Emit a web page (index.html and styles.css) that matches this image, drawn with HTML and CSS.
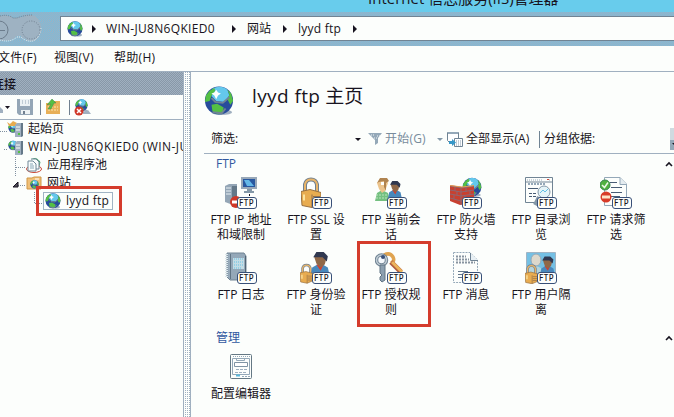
FILE: index.html
```html
<!DOCTYPE html>
<html lang="zh-CN">

<head>
    <meta charset="utf-8">
    <title>Internet 信息服务(IIS)管理器</title>
    <link rel="stylesheet" href="styles.css">
</head>

<body>
    <!-- shared icon shapes -->
    <svg class="defs" width="0" height="0">
        <symbol id="globe" viewBox="0 0 32 32">
            <ellipse cx="19" cy="28" rx="11" ry="3" fill="#a0b0c0" />
            <circle cx="16" cy="15.500" r="15" fill="#284c9c" />
            <path d="M9 3 C14 0 21 0 25 4 L27 10 L22 17 L13 16 L8 11z" fill="#64c8ec" />
            <path d="M2 10 L6 5 L11 2 L12 5 L8 10 L6 16 L1 17z M25 4 L29 8 L31 16 L28 20 L25 14 L27 9z M8 20 L14 19 L21 23 L20 28 L15 30 L9 27z" fill="#54c044" />
            <path d="M8 13 L12 17 L20 18 L27 12 M9 28 L19 29 L23 24" fill="none" stroke="#708494" stroke-width="2" />
            <path d="M13 4 L15 7 L18 8 L15 10 L13 14 L11 10 L8 8 L11 7z" fill="#fcfefc" />
        </symbol>
        <symbol id="server" viewBox="0 0 16 16">
            <path d="M8 4 L10 2 H16 V15 L14 16 H8z" fill="#a0b0c0" />
            <path d="M14 2 H16 V15 L14 16z" fill="#647888" />
            <path d="M9 6 H13 M9 9 H13" stroke="#fcfefc" />
            <path d="M11 12 H13 V14 H11z" fill="#54c044" />
        </symbol>
        <symbol id="person" viewBox="0 0 20 24">
            <path d="M1 24 L3 15 L8 12 H13 L18 15 L20 24z" fill="#4888bc" />
            <path d="M7 12 L11 18 L14 12z" fill="#d04030" />
            <path d="M5 5 L8 1 H14 L17 5 L15 12 L11 15 L7 11z" fill="#906848" />
            <path d="M4 5 L7 0 H14 L18 4 L17 9 L13 5 H7z" fill="#303850" />
        </symbol>
        <symbol id="lock" viewBox="0 0 20 30">
            <path d="M4 15 V7 Q5 2 10 2 Q15 2 16 7 V16" fill="none" stroke="#708090" stroke-width="4" />
            <path d="M4 15 V7 Q5 2 10 2 Q15 2 16 7 V16" fill="none" stroke="#e8b468" stroke-width="2" />
            <path d="M0 14 L9 12 L20 15 V26 L11 30 L1 28z" fill="#e8ac50" stroke="#987040" />
            <path d="M11 17 V30 M12 19 H19 M12 22 H19 M12 25 H19" stroke="#906c48" />
            <path d="M3 17 V23" stroke="#fce4a0" stroke-width="2" />
        </symbol>
    </svg>

    <div class="titlebar"><span>Internet 信息服务(IIS)管理器</span></div>

    <div class="navbar">
        <svg class="nav-buttons" width="44" height="30" viewBox="0 0 44 30">
            <path d="M0 3 Q8 1 13 5 H17 Q24 3 31 2 Q39 3 41 13 Q42 23 34 28 Q27 29 21 23 H17 Q11 29 0 27z" fill="#9eb2c2" />
            <path d="M0 3 Q8 1 13 5 H17 Q24 2 33 2" fill="none" stroke="#708090" stroke-dasharray="1 1" />
            <path d="M41 15 Q40 25 33 28 Q26 29 21 24 H17 Q10 30 0 27" fill="none" stroke="#e8f4f8" stroke-dasharray="1 1" />
            <circle cx="-1" cy="17" r="9" fill="none" stroke="#6c7c8c" />
            <circle cx="31" cy="17" r="9" fill="none" stroke="#708090" stroke-dasharray="1 1.500" />
            <path d="M0 17.500 H5" stroke="#6c7c8c" />
        </svg>
        <div class="address">
            <svg width="16" height="16"><use href="#globe" /></svg>
            <i class="arrow"></i>
            <span class="server-name">WIN-JU8N6QKIED0</span>
            <i class="arrow"></i>
            <span>网站</span>
            <i class="arrow"></i>
            <span class="site-name">lyyd ftp</span>
            <i class="arrow"></i>
        </div>
    </div>

    <div class="menubar">
        <span class="menu file">文件(F)</span>
        <span class="menu view">视图(V)</span>
        <span class="menu help">帮助(H)</span>
    </div>

    <div class="main">
        <div class="sidebar">
            <div class="sidebar-title"><span>连接</span></div>
            <div class="tools">
                <svg width="92" height="18" viewBox="0 0 92 18">
                    <path d="M0 9 L3 12 V15 H0z" fill="#a0b0c0" />
                    <path d="M5 8 H10 L7.500 11z" fill="#181420" />
                    <path d="M17 1 H33 V17 H19 L17 15z" fill="#94a6b6" />
                    <path d="M20 1 H30 V8 H20z M21 12 H30 V16 H21z" fill="#ecf2f4" />
                    <path d="M22 3 H29 M22 5 H29" stroke="#94a6b6" stroke-dasharray="1 2" />
                    <path d="M23 13 H25 V16 H23z" fill="#708090" />
                    <path d="M40.500 2 V17 M69.500 2 V17" stroke="#708090" />
                    <path d="M46 5 H50 L52 3 H60 V16 H46z" fill="#e8b058" />
                    <path d="M48 9 H58 M48 12 H58" stroke="#fce8b0" stroke-dasharray="2 1" />
                    <path d="M47 7 L52 1 L56 5 H54 L51 11 H48 L51 6z" fill="#54c044" stroke="#408448" stroke-width=".5" />
                    <svg x="75" y="1" width="13" height="13"><use href="#globe" /></svg>
                    <path d="M83 14 L88 12 L91 16 H83z" fill="#a0b0c0" />
                    <circle cx="79" cy="13" r="4.500" fill="#d03828" />
                    <path d="M77 11 L81 15 M81 11 L77 15" stroke="#fff" stroke-width="1.500" />
                </svg>
            </div>
            <div class="tree">
                <div class="node level-1">
                    <svg width="16" height="16">
                        <svg x="1" y="2" width="10" height="10"><use href="#globe" /></svg>
                        <path d="M0 1 L3 3 L6 0 L10 2 L8 5 L2 5z" fill="#e8ac50" />
                        <use href="#server" />
                    </svg>
                    <span>起始页</span>
                </div>
                <div class="node level-1">
                    <svg width="16" height="16">
                        <svg x="1" y="1" width="10" height="11"><use href="#globe" /></svg>
                        <use href="#server" />
                    </svg>
                    <span class="server-root">WIN-JU8N6QKIED0 (WIN-JU8N6QKIED0\Administrator)</span>
                </div>
                <div class="node level-2">
                    <svg width="16" height="16">
                        <ellipse cx="8" cy="12" rx="7.500" ry="3.500" fill="#fff" stroke="#c84838" />
                        <path d="M5 3 Q10 -1 14 5 L13 9" fill="#c8e4d8" stroke="#48a070" />
                        <path d="M2 4 H7 L10 7 V14 H2z M5 2 H10 L13 5 V12 H10" fill="#f8fcfc" stroke="#708898" />
                        <path d="M4 7 H7 M4 9 H8 M4 11 H8" stroke="#88a8b8" />
                    </svg>
                    <span>应用程序池</span>
                </div>
                <div class="node level-2">
                    <svg width="16" height="16">
                        <path d="M1 3 H6 L8 2 H15 V14 H1z" fill="#f0c078" stroke="#d09848" />
                        <path d="M9 4 H13" stroke="#fff" />
                        <svg x="4" y="5" width="9" height="9"><use href="#globe" /></svg>
                    </svg>
                    <span>网站</span>
                </div>
                <div class="node level-3">
                    <span class="selected">
                        <svg width="16" height="16"><use href="#globe" /></svg>
                        <span class="site-name">lyyd ftp</span>
                    </span>
                </div>
                <svg class="tree-lines" width="50" height="90" viewBox="0 0 50 90">
                    <path d="M0 11.500 H7 M4 29.500 H7 M15.500 37 V57 M16 47.500 H26 M18 65.500 H26 M34.500 72 V83 M35 83.500 H43" fill="none" stroke="#8090a0" stroke-dasharray="1 1" />
                    <path d="M13 67 L18 62 V67z" fill="#504c58" stroke="#181420" />
                </svg>
                <i class="marker site-marker"></i>
            </div>
        </div>
        <div class="splitter"></div>

        <div class="content">
            <div class="page-title">
                <svg width="30" height="32"><use href="#globe" /></svg>
                <h1><span class="title-latin">lyyd ftp</span> 主页</h1>
            </div>
            <div class="filterbar">
                <span class="filter-label">筛选:</span>
                <i class="down"></i>
                <svg class="funnel" width="15" height="14" viewBox="0 0 15 14">
                    <path d="M0 1 H14 L10 6 V11 L7 13 V8z" fill="#94a8b8" />
                    <path d="M3 3 H7 M9 4 H12 M6 6 H9" stroke="#eef4f6" stroke-dasharray="1 1" />
                </svg>
                <span class="muted">开始(G)</span>
                <i class="down light"></i>
                <svg class="show-all" width="16" height="17" viewBox="0 0 16 17">
                    <path d="M.5 1.500 H11.500 V11.500 H2.500 L.5 9.500z" fill="#fff" stroke="#708494" />
                    <path d="M1 2 H11" stroke="#94a8b8" stroke-width="2" />
                    <path d="M7.500 7.500 H15.500 V15.500 H7.500z" fill="#fff" stroke="#708494" />
                    <path d="M9 10 H15 M9 12 H15 M9 14 H15" stroke="#889cac" stroke-dasharray="1 1" />
                    <path d="M2 10 H5 V8 L9 11.500 L5 15 V13 H2z" fill="#3898c8" />
                </svg>
                <span class="show-label">全部显示(A)</span>
                <i class="divider"></i>
                <span class="group-by">分组依据:</span>
                <svg class="combo" width="4" height="22" viewBox="0 0 4 22">
                    <path d="M0 0 H4 V12 H0z" fill="#d0dae0" />
                    <path d="M0 12 H4 V22 H0z" fill="#94a8b8" />
                    <path d="M2 15 H4 V17z" fill="#181420" />
                </svg>
            </div>

            <div class="group-title"><span>FTP</span>
                <svg width="8" height="6"><path d="M1 5 L4 2 L7 5" fill="none" stroke="#181420" stroke-width="1.600" /></svg>
            </div>
            <div class="features">
                <div class="feature">
                    <div class="icon">
                        <svg width="32" height="32">
                            <path d="M0 9 L4 7 H12 V25 L8 28 L0 25z" fill="#94a6b6" />
                            <path d="M7 9 H12 V25 L7 28z" fill="#647888" />
                            <path d="M1 11 H6 M1 14 H6 M1 17 H6" stroke="#e8f0f4" />
                            <path d="M16 0 H32 V12 H16z" fill="#98a8b8" />
                            <path d="M18 2 H30 V10 H18z" fill="#2858a0" />
                            <path d="M19 3 L24 3 L29 9 H22z" fill="#64b8e8" />
                            <path d="M22 13 H27 M19 15 H29" stroke="#8498a8" stroke-width="2" />
                            <path d="M24.500 17 V22" stroke="#181420" stroke-dasharray="2 1" />
                            <circle cx="11" cy="25" r="6" fill="#d03828" />
                            <path d="M7 25 H15" stroke="#fff" stroke-width="3" />
                        </svg>
                        <b class="badge">FTP</b>
                    </div>
                    <p>FTP IP 地址<br>和域限制</p>
                </div>
                <div class="feature">
                    <div class="icon">
                        <svg width="32" height="32"><svg x="1" y="0" width="20" height="31"><use href="#lock" /></svg></svg>
                        <b class="badge">FTP</b>
                    </div>
                    <p>FTP SSL 设<br>置</p>
                </div>
                <div class="feature">
                    <div class="icon">
                        <svg width="32" height="32">
                            <path d="M0 24 L2 16 L7 13 L13 16 L15 24z" fill="#74c080" />
                            <path d="M1 18 H12 M1 21 H12" stroke="#b8e4bc" stroke-dasharray="2 1" />
                            <path d="M2 6 L5 2 H11 L13 6 L10 14 L7 16 L4 12z" fill="#ecc48c" />
                            <path d="M2 6 L5 1 H12 L14 4 L11 6 L11 14 L9 10 V4 L4 5z" fill="#b08450" />
                            <path d="M6 5 H9 V8 H6z" fill="#fcfefc" />
                            <svg x="12" y="3" width="15" height="20"><use href="#person" /></svg>
                        </svg>
                        <b class="badge">FTP</b>
                    </div>
                    <p>FTP 当前会<br>话</p>
                </div>
                <div class="feature">
                    <div class="icon">
                        <svg width="32" height="32">
                            <svg x="12" y="0" width="20" height="21"><use href="#globe" /></svg>
                            <path d="M0 8 L12 10 L24 9 V26 L10 28 L0 24z" fill="#c84030" />
                            <path d="M0 9 L12 11 L24 9 M0 13 L11 15 L24 13 M0 17 L11 19 L24 17 M0 21 L11 24 L24 21 M11 11 V28 M5 10 V14 M7 14 V18 M4 18 V22 M16 11 V15 M20 14 V18 M15 18 V22" fill="none" stroke="#807080" stroke-width=".8" />
                            <path d="M0 8.500 L12 10 L24 8.500" fill="none" stroke="#e0a058" />
                        </svg>
                        <b class="badge">FTP</b>
                    </div>
                    <p>FTP 防火墙<br>支持</p>
                </div>
                <div class="feature">
                    <div class="icon">
                        <svg width="32" height="32">
                            <path d="M.5 .5 H27.500 V25.500 H.5z" fill="#fcfefc" stroke="#708494" />
                            <path d="M2 3 H17 M24 3 H26" stroke="#94a8b8" stroke-dasharray="1 1" />
                            <path d="M1 5 H27" stroke="#708494" />
                            <path d="M22 2.500 H24" stroke="#d04838" />
                            <path d="M3 7 H20" stroke="#94a8b8" stroke-width="2" stroke-dasharray="2 1" />
                            <path d="M3 11.500 H13 M4 16.500 H7 M8 16.500 H11 M4 19.500 H7 M8 19.500 H11" stroke="#485c74" />
                            <path d="M14 20 L10 28" stroke="#8498a8" stroke-width="4" />
                            <circle cx="19" cy="15" r="6" fill="#e4f4f8" stroke="#8498a8" />
                            <path d="M15 16 L18 13 L20 15 L23 12" fill="none" stroke="#64c0e4" />
                        </svg>
                        <b class="badge">FTP</b>
                    </div>
                    <p>FTP 目录浏<br>览</p>
                </div>
                <div class="feature">
                    <div class="icon">
                        <svg width="32" height="32">
                            <path d="M4.500 .5 H20 L26.500 7 V28.500 H4.500z" fill="#fcfefc" stroke="#94a8b8" />
                            <path d="M20 .5 V7.500 H27" fill="#e4ecf0" stroke="#94a8b8" />
                            <path d="M10 5.500 H17 M11 10.500 H22 M11 15.500 H22 M11 19.500 H20" stroke="#485c74" />
                            <circle cx="5" cy="8" r="5" fill="#50b040" stroke="#388450" />
                            <path d="M2 8 L4.500 10.500 L8 5.500" fill="none" stroke="#ecf8e8" stroke-width="1.500" />
                            <circle cx="6" cy="20" r="5.500" fill="#d83c28" />
                            <path d="M2 20 H10" stroke="#fce4c8" stroke-width="3" />
                        </svg>
                        <b class="badge">FTP</b>
                    </div>
                    <p>FTP 请求筛<br>选</p>
                </div>
                <div class="feature">
                    <div class="icon">
                        <svg width="32" height="32">
                            <path d="M2 1 H19 L21 4 V28 H5 L2 25z" fill="#94a8b8" stroke="#708494" />
                            <path d="M8 6 H19 V17 H8z" fill="#c4dce4" />
                            <path d="M9 7 H18 M9 10 H18 M9 13 H18 M9 16 H16" stroke="#64c0e4" stroke-dasharray="1 1" />
                            <path d="M5.500 2 V27" stroke="#607484" />
                            <path d="M1.500 2 V26" stroke="#dce8ec" stroke-width="3" stroke-dasharray="1 1" />
                            <path d="M20.500 4 V27" stroke="#506474" />
                        </svg>
                        <b class="badge">FTP</b>
                    </div>
                    <p>FTP 日志</p>
                </div>
                <div class="feature">
                    <div class="icon">
                        <svg width="32" height="32">
                            <svg x="9" y="0" width="21" height="25"><use href="#person" /></svg>
                            <svg x="0" y="11" width="13" height="21"><use href="#lock" /></svg>
                        </svg>
                        <b class="badge">FTP</b>
                    </div>
                    <p>FTP 身份验<br>证</p>
                </div>
                <div class="feature">
                    <div class="icon">
                        <svg width="32" height="32">
                            <path d="M9 3 Q15 0 18 5 Q20 9 16 11" fill="none" stroke="#e0a450" stroke-width="3.500" />
                            <path d="M16 10 L26 20" stroke="#b05c40" stroke-width="5" />
                            <path d="M17 10 L27 20" stroke="#ecb45c" stroke-width="3" />
                            <circle cx="6.500" cy="8" r="5" fill="#f4f8fc" stroke="#708494" stroke-width="3.500" />
                            <circle cx="6.500" cy="8" r="5" fill="none" stroke="#c0ccd4" stroke-width="1.500" />
                            <circle cx="8" cy="5" r="2" fill="#385078" />
                            <path d="M5 13 H10 V28 L7 30 L5 28 V25 L7 23 L5 21z" fill="#8ca0b0" stroke="#607484" />
                        </svg>
                        <b class="badge">FTP</b>
                    </div>
                    <p>FTP 授权规<br>则</p>
                    <i class="marker rule-marker"></i>
                </div>
                <div class="feature">
                    <div class="icon">
                        <svg width="32" height="32">
                            <path d="M3.500 .5 H20 L27.500 8 V30.500 H3.500z" fill="#fcfefc" stroke="#94a8b8" stroke-dasharray="2 1" />
                            <path d="M20.500 1 V8.500 H28" fill="#e8f0f4" stroke="#708494" />
                            <path d="M6 4.500 H16 M6 7.500 H19 M6 10.500 H25" stroke="#8894a0" stroke-width="2" stroke-dasharray="2 1" />
                            <path d="M8 19.500 H18 M8 22.500 H14 M8 25.500 H13" stroke="#64788c" />
                        </svg>
                        <b class="badge">FTP</b>
                    </div>
                    <p>FTP 消息</p>
                </div>
                <div class="feature">
                    <div class="icon">
                        <svg width="32" height="32">
                            <path d="M1.500 .5 H30.500 V29.500 H1.500z" fill="#74c0e4" stroke="#a0b4c4" />
                            <path d="M2 15 L7 12 L16 16 L17 28 H2z" fill="#b4d4dc" />
                            <ellipse cx="11" cy="8" rx="5" ry="6" fill="#dcd8cc" stroke="#94a8b8" />
                            <svg x="14" y="4" width="16" height="20"><use href="#person" /></svg>
                            <svg x="0" y="12" width="13" height="20"><use href="#lock" /></svg>
                        </svg>
                        <b class="badge">FTP</b>
                    </div>
                    <p>FTP 用户隔<br>离</p>
                </div>
            </div>

            <div class="group-title manage"><span>管理</span>
                <svg width="8" height="6"><path d="M1 5 L4 2 L7 5" fill="none" stroke="#181420" stroke-width="1.600" /></svg>
            </div>
            <div class="features">
                <div class="feature">
                    <div class="icon config">
                        <svg width="22" height="25" viewBox="0 0 22 25">
                            <rect x=".5" y=".5" width="21" height="24" rx="1" fill="#fcfefc" stroke="#647884" />
                            <path d="M3 2.500 H20" stroke="#94a8b8" stroke-dasharray="1 1" />
                            <path d="M2.500 4.500 H19.500 V20.500 H2.500z M6.500 4 V6.500 H14.500 V4" fill="none" stroke="#94a8b8" />
                            <path d="M4.500 8.500 H17.500 V12.500 H4.500z" fill="#fff" stroke="#8094a4" />
                            <path d="M6 15.500 H17 M5 18.500 H17" stroke="#a0b0c0" stroke-dasharray="3 1" />
                            <path d="M6 21.500 H10" stroke="#58b8dc" stroke-width="2" />
                            <path d="M12 22.500 H20" stroke="#94a8b8" stroke-dasharray="2 1" />
                        </svg>
                    </div>
                    <p>配置编辑器</p>
                </div>
            </div>
        </div>
    </div>
</body>

</html>
```
FILE: styles.css
```css
* {
    box-sizing: border-box;
}

body {
    width: 674px;
    height: 417px;
    margin: 0;
    overflow: hidden;
    background-color: #fcfefc;
    color: #181420;
    font-family: "Open Sans", "Noto Sans CJK SC", sans-serif;
    font-size: 12px;
    line-height: 18px;
    white-space: nowrap;
    display: flex;
    flex-direction: column;
}

svg {
    display: block;
    flex: none;
}

i {
    flex: none;
}

.defs {
    position: absolute;
}

.titlebar {
    height: 12px;
    flex: none;
    overflow: hidden;
    background-color: #68ccec;
    padding-left: 368px;
    font-size: 15px;
    line-height: 20px;
}

.titlebar span {
    display: block;
    margin-top: -12px;
}

.navbar {
    height: 34px;
    flex: none;
    display: flex;
    background: repeating-conic-gradient(#a0b0c0 0 25%, #78bcdc 0 50%) 0 0 / 2px 2px;
}

.nav-buttons {
    margin: 1px 16px 0 0;
}

.address {
    flex: 1;
    height: 25px;
    margin-top: 4px;
    padding-left: 6px;
    border: 1px solid #708494;
    border-right: none;
    background-color: #fcfefc;
    display: flex;
    align-items: center;
}

/* breadcrumb arrow */
.arrow {
    border: 4px solid transparent;
    border-left-color: #181420;
    border-right: none;
    margin: 0 11px 0 12px;
}

.address svg + .arrow {
    margin: 0 10px 0 9px;
}

.server-name {
    width: 114px;
    letter-spacing: 0.300px;
}

.site-name {
    width: 43px;
    letter-spacing: 0.250px;
}

.menubar {
    height: 25px;
    flex: none;
    display: flex;
    line-height: 24px;
    letter-spacing: 0.300px;
}

.file {
    width: 56px;
    margin-left: -2px;
}

.view {
    width: 60px;
}

.main {
    flex: 1;
    display: flex;
    min-height: 0;
    border-top: 1px solid #a0b0c0;
}

.sidebar {
    width: 184px;
    flex: none;
    border-right: 1px solid #a0b0c0;
}

.sidebar-title {
    height: 23px;
    overflow: hidden;
    line-height: 25px;
    background: repeating-conic-gradient(#8898a8 0 25%, #a0b0c0 0 50%) 0 0 / 2px 2px;
}

.sidebar-title span {
    margin-left: -8px;
    font-weight: 500;
}

.tools {
    height: 25px;
    padding-top: 3px;
    border-bottom: 1px solid #a0b0c0;
}

.tree {
    position: relative;
}

.node {
    height: 18px;
    display: flex;
    align-items: center;
    gap: 5px;
    overflow: hidden;
}

.level-1 {
    padding-left: 7px;
}

.level-2 {
    padding-left: 26px;
}

.level-3 {
    padding-left: 43px;
}

.server-root {
    letter-spacing: 0.450px;
}

.selected {
    width: 70px;
    height: 18px;
    padding-left: 1px;
    border: 1px solid #a0b4c4;
    display: flex;
    align-items: center;
    gap: 5px;
}

.tree-lines {
    position: absolute;
    left: 0;
    top: 0;
}

/* red frames around the two highlighted items */
.marker {
    position: absolute;
    border: 3px solid #d43c2c;
}

.site-marker {
    left: 36px;
    top: 66px;
    width: 86px;
    height: 30px;
}

.splitter {
    width: 6px;
    flex: none;
    background: conic-gradient(#a0b0c0 0 25%, #fcfefc 0) 0 0 / 2px 2px;
}

.content {
    flex: 1;
    min-width: 0;
    border-left: 1px solid #a0b0c0;
}

.page-title {
    height: 53px;
    padding: 5px 0 0 13px;
    display: flex;
    align-items: center;
    gap: 18px;
}

h1 {
    margin: -11px 0 0;
    font-size: 19px;
    font-weight: 400;
    line-height: 28px;
}

.title-latin {
    letter-spacing: 0.400px;
}

.filterbar {
    height: 29px;
    margin-left: 13px;
    border-bottom: 1px solid #a0b0c0;
    display: flex;
    align-items: center;
}

.filter-label {
    width: 151px;
    padding-left: 7px;
}

.down {
    border: 3px solid transparent;
    border-top-color: #181420;
    border-bottom: none;
}

.light {
    border-top-color: #8498a8;
    margin: 0 4px 0 9px;
}

.funnel {
    margin: 0 2px 0 7px;
}

.muted {
    width: 43px;
    color: #788c9c;
    letter-spacing: 0.200px;
}

.show-label {
    width: 76px;
    padding-left: 3px;
    letter-spacing: 0.100px;
}

.divider {
    height: 17px;
    border-left: 1px solid #708494;
    margin-right: 4px;
}

.combo {
    margin-left: auto;
}

.group-title {
    height: 20px;
    padding: 0 1px 0 25px;
    display: flex;
    justify-content: space-between;
    align-items: center;
    color: #3058a0;
}

.features {
    padding-left: 12px;
    display: grid;
    grid-template-columns: repeat(6, 75px);
    grid-auto-rows: 75px;
}

.feature {
    position: relative;
    padding-top: 3px;
    text-align: center;
}

.feature p {
    margin: 3px 0 0 1px;
    line-height: 15px;
}

.icon {
    position: relative;
    width: 32px;
    height: 32px;
    margin: 0 auto;
}

.badge {
    position: absolute;
    right: 0;
    bottom: 0;
    width: 20px;
    height: 12px;
    border: 1px solid #385078;
    border-radius: 3px;
    background-color: #fcfefc;
    font: 500 8px/10px "Noto Sans", sans-serif;
    letter-spacing: 0.500px;
    text-align: center;
}

.rule-marker {
    left: 4px;
    top: -8px;
    width: 74px;
    height: 86px;
}

.manage {
    margin-top: 4px;
}

.config {
    width: 22px;
    height: 32px;
    padding-top: 3px;
}
```
